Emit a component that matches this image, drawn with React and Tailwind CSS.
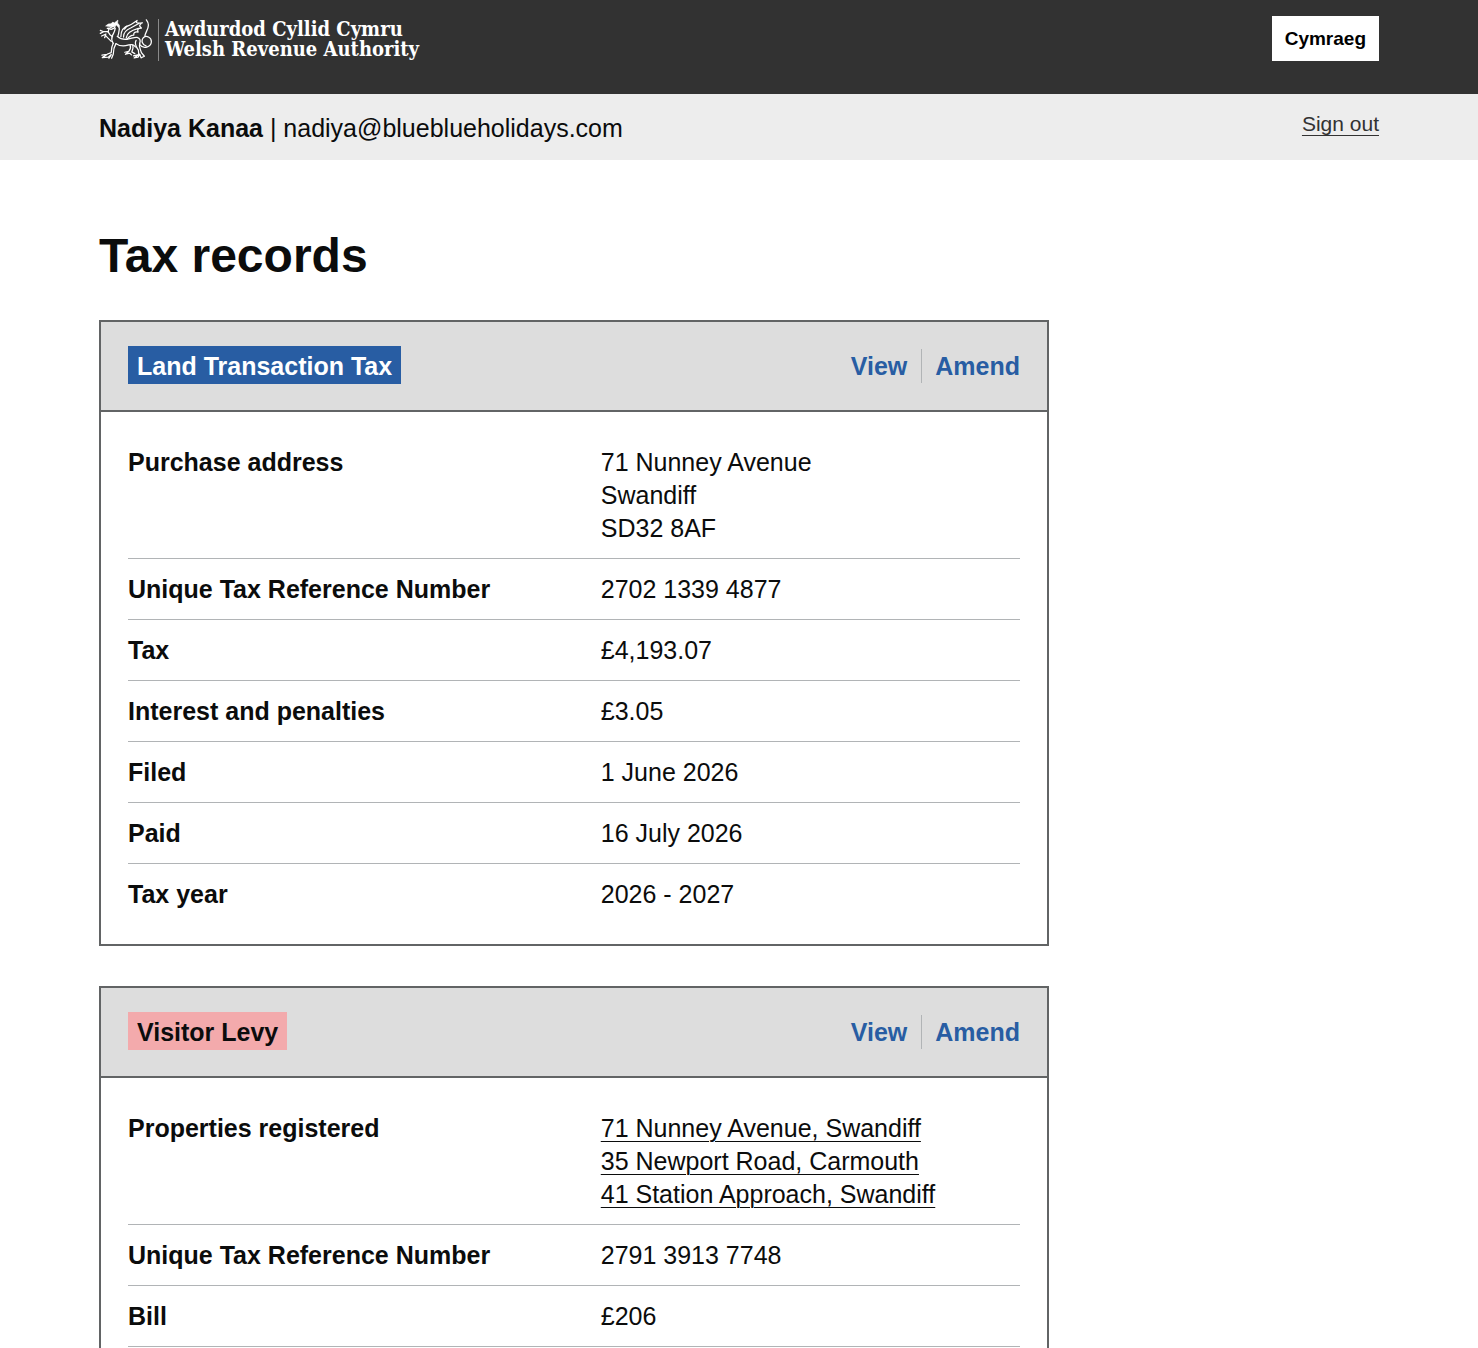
import React from "react";

const records = [
  {
    title: "Land Transaction Tax",
    tag: "bg-[#285da3] text-white",
    rows: [
      { label: "Purchase address", lines: ["71 Nunney Avenue", "Swandiff", "SD32 8AF"] },
      { label: "Unique Tax Reference Number", lines: ["2702 1339 4877"] },
      { label: "Tax", lines: ["£4,193.07"] },
      { label: "Interest and penalties", lines: ["£3.05"] },
      { label: "Filed", lines: ["1 June 2026"] },
      { label: "Paid", lines: ["16 July 2026"] },
      { label: "Tax year", lines: ["2026 - 2027"], last: true },
    ],
  },
  {
    title: "Visitor Levy",
    tag: "bg-[#f3aaac] text-[#0b0c0c]",
    rows: [
      {
        label: "Properties registered",
        links: true,
        lines: ["71 Nunney Avenue, Swandiff", "35 Newport Road, Carmouth", "41 Station Approach, Swandiff"],
      },
      { label: "Unique Tax Reference Number", lines: ["2791 3913 7748"] },
      { label: "Bill", lines: ["£206"] },
    ],
  },
];

function Dragon() {
  return (
    <svg
      viewBox="0 0 160 126"
      className="h-[42px] w-[53px] shrink-0"
      fill="none"
      stroke="white"
      strokeWidth="3.8"
      strokeLinecap="round"
      strokeLinejoin="round"
      aria-hidden="true"
    >
      {/* head and jaw */}
      <path d="M21 20 L28 15 L36 14 L42 9 L46 12 L57 3 L56 12 L61 18 L60 25 L52 18 L44 22 L30 22 Z" fill="white" strokeWidth="2" />
      <path d="M25 28 L34 26 L43 22 M25 28 L37 31 L46 27 L49 20" />
      {/* neck and chest */}
      <path d="M60 20 C65 34 58 43 57 52 M49 27 C48 38 43 44 40 51 C37 59 39 67 43 73" />
      {/* raised foreleg */}
      <path d="M41 53 L33 47 L27 38 M37 67 L28 58 L19 49" />
      <path d="M27 38 L14 38 L4 34 M14 38 L4 43 M21 45 L8 51 M28 39 L29 32 M20 48 L17 56" />
      {/* wings */}
      <path d="M66 53 C66 31 75 23 91 19 C99 17 105 10 115 4 C110 13 116 13 131 11 C120 18 121 21 128 27 C117 27 115 32 118 39 C108 37 104 41 105 48 C95 47 90 54 84 61" />
      <path d="M74 54 C73 38 85 31 97 26 L120 13 M82 57 C84 42 95 35 119 28 M77 30 L84 21" />
      {/* body */}
      <path d="M55 52 C62 58 69 62 83 61 C96 60 105 54 115 55 C124 57 126 65 123 73 M52 74 C65 84 78 82 90 78 C101 75 107 78 110 84" />
      {/* standing foreleg */}
      <path d="M43 73 C39 80 37 88 37 101 L24 106 L9 109 M51 74 C46 83 43 92 43 106 L38 118 M24 107 L10 116 L28 115 L37 107 L30 118" />
      {/* rear legs */}
      <path d="M112 64 C105 75 113 84 119 94 L120 107 L104 111 M123 73 C119 83 125 90 128 101 L137 112 L129 116 M120 107 L106 117 L118 115 L123 106 L127 117" />
      <path d="M94 79 C97 86 96 90 90 97 L78 100 M102 78 C105 88 102 93 99 99 L108 104 M90 98 L80 106 L93 103 L98 108" />
      {/* tail */}
      <path d="M123 77 C134 92 157 84 158 69 C159 54 142 48 134 56 C126 65 131 78 142 81 M138 53 C139 40 150 31 149 17 C149 10 146 6 143 2" />
    </svg>
  );
}

function Record({ record }) {
  return (
    <section className="w-full max-w-[950px] border-2 border-[#626465]">
      <header className="flex items-center justify-between border-b-2 border-[#626465] bg-[#dddddd] px-[27px] pt-6 pb-[26px] font-bold">
        <h2 className={"px-[9px] pt-[5px] pb-[3px] leading-[30px] " + record.tag}>{record.title}</h2>
        <nav className="flex pt-0.5 leading-[34px] text-[#285da3]">
          <a href="#view" className="border-r border-[#b1b4b6] pr-[14px]">View</a>
          <a href="#amend" className="pl-[13px]">Amend</a>
        </nav>
      </header>
      <dl className="px-[27px] py-5">
        {record.rows.map((row) => (
          <div
            key={row.label}
            className={
              "grid grid-cols-[53%_1fr] border-[#b1b4b6] pt-[14px] pb-[13px] leading-[33px] " +
              (row.last ? "border-b-0" : "border-b")
            }
          >
            <dt className="font-bold">{row.label}</dt>
            <dd>
              {row.lines.map((line) => (
                <div key={line}>
                  {row.links ? (
                    <a href="#property" className="underline decoration-1 underline-offset-4">{line}</a>
                  ) : (
                    line
                  )}
                </div>
              ))}
            </dd>
          </div>
        ))}
      </dl>
    </section>
  );
}

export default function App() {
  return (
    <div className="min-h-screen bg-white font-['Helvetica_Neue','Liberation_Sans',sans-serif] text-[25px] text-[#0b0c0c]">
      <div className="bg-[#323232] px-8">
        <div className="mx-auto flex max-w-[1280px] items-start justify-between pt-4 pb-[33px]">
          <a href="#home" className="flex items-start pt-[3px] text-white">
            <Dragon />
            <span className="ml-[6px] h-[42px] w-px bg-[#8a8a8a]" />
            <span className="ml-[6px] font-['DejaVu_Serif_Condensed','DejaVu_Serif',serif] text-[20px] leading-5 font-bold">
              Awdurdod Cyllid Cymru
              <br />
              Welsh Revenue Authority
            </span>
          </a>
          <button type="button" className="bg-white px-[13px] text-[19px] leading-[45px] font-bold text-black">
            Cymraeg
          </button>
        </div>
      </div>
      <div className="bg-[#ededed] px-8">
        <div className="mx-auto flex max-w-[1280px] items-start justify-between pt-[14px] pb-[18px] leading-[34px]">
          <p className="pt-[3px] -mb-[3px]">
            <strong>Nadiya Kanaa</strong> | nadiya@blueblueholidays.com
          </p>
          <a href="#signout" className="text-[21px] leading-8 text-[#323232] underline decoration-1 underline-offset-4">
            Sign out
          </a>
        </div>
      </div>
      <main className="px-8">
        <div className="mx-auto flex max-w-[1280px] flex-col gap-10 pt-[68px]">
          <h1 className="pt-1 text-[48px] leading-[48px] font-bold">Tax records</h1>
          {records.map((record) => (
            <Record key={record.title} record={record} />
          ))}
        </div>
      </main>
    </div>
  );
}
